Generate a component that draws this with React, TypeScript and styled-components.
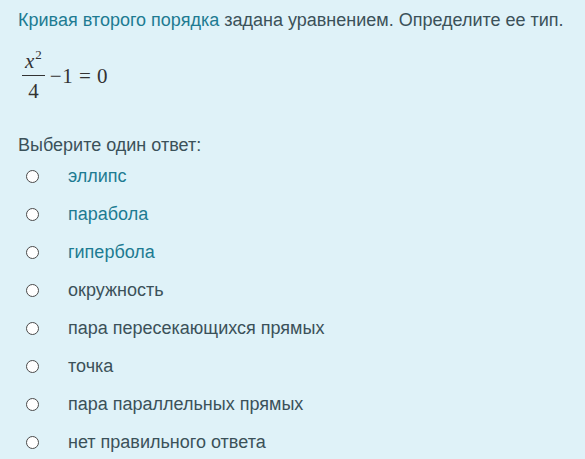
import React from "react";
import styled, { createGlobalStyle } from "styled-components";

const Global = createGlobalStyle`
  html, body { margin: 0; padding: 0; background: #dff2f8; }
  body { font-family: "Liberation Sans", Arial, sans-serif; }
`;

const Page = styled.div`
  width: 585px;
  height: 459px;
  box-sizing: border-box;
  padding: 9px 0 0 18px;
  background: #dff2f8;
  color: #3b5159;
  overflow: hidden;
`;

const Question = styled.div`
  font-size: 18px;
  line-height: 22px;
  white-space: nowrap;
`;

const Accent = styled.span`
  color: #1d7b92;
`;

const Formula = styled.div`
  display: flex;
  align-items: center;
  margin-top: 18px;
  padding-left: 4px;
  font-family: "Liberation Serif", "Times New Roman", serif;
  font-size: 21px;
  color: #333;
`;

const Fraction = styled.div`
  display: inline-flex;
  flex-direction: column;
  align-items: stretch;
  margin-right: 5px;
`;

const Num = styled.div`
  padding: 0 3px 1px;
  border-bottom: 1px solid #333;
  line-height: 25px;
  text-align: center;
`;

const Var = styled.i`
  font-style: italic;
`;

const Den = styled.div`
  padding-top: 3px;
  line-height: 25px;
  text-align: center;
`;

const Sup = styled.sup`
  font-size: 13px;
  vertical-align: 9px;
  line-height: 0;
  margin-left: 1px;
`;

const Rest = styled.span`
  line-height: 21px;
  white-space: pre;
  letter-spacing: 0.5px;
`;

const Prompt = styled.div`
  margin-top: 30px;
  font-size: 18px;
  line-height: 22px;
`;

const Options = styled.div`
  display: flex;
  flex-direction: column;
  padding-top: 1px;
`;

const Option = styled.label<{ $accent?: boolean }>`
  display: flex;
  align-items: center;
  height: 38px;
  padding-left: 8px;
  font-size: 18px;
  line-height: 22px;
  color: ${(p) => (p.$accent ? "#1d7b92" : "#3b5159")};
`;

const Radio = styled.span`
  box-sizing: border-box;
  width: 13px;
  height: 13px;
  border-radius: 50%;
  background: #fff;
  border: 1.5px solid #4a4a4a;
  margin-right: 29px;
  flex-shrink: 0;
`;

const options: { text: string; accent?: boolean }[] = [
  { text: "эллипс", accent: true },
  { text: "парабола", accent: true },
  { text: "гипербола", accent: true },
  { text: "окружность" },
  { text: "пара пересекающихся прямых" },
  { text: "точка" },
  { text: "пара параллельных прямых" },
  { text: "нет правильного ответа" },
];

export default function App() {
  return (
    <Page>
      <Global />
      <Question>
        <Accent>Кривая второго порядка</Accent> задана уравнением. Определите ее тип.
      </Question>
      <Formula>
        <Fraction>
          <Num>
            <Var>x</Var>
            <Sup>2</Sup>
          </Num>
          <Den>4</Den>
        </Fraction>
        <Rest>−1 = 0</Rest>
      </Formula>
      <Prompt>Выберите один ответ:</Prompt>
      <Options>
        {options.map((o) => (
          <Option key={o.text} $accent={o.accent}>
            <Radio />
            {o.text}
          </Option>
        ))}
      </Options>
    </Page>
  );
}
